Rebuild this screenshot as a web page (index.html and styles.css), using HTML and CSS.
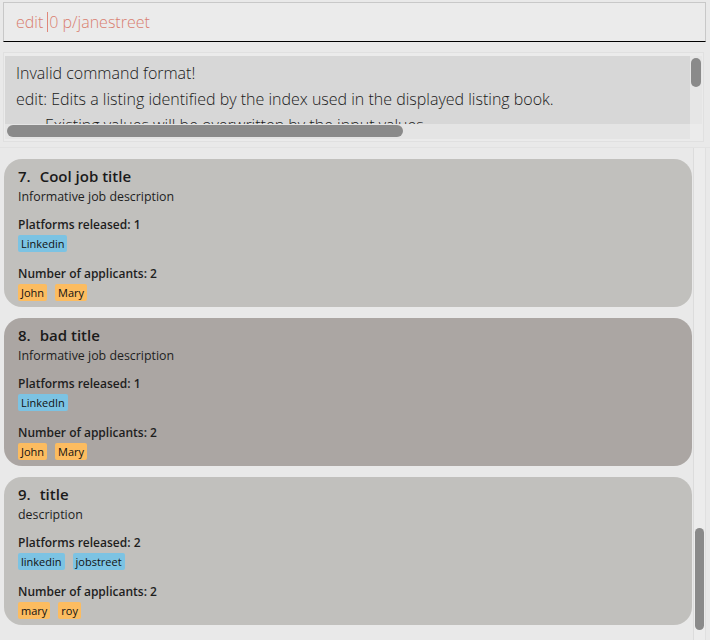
FILE: index.html
```html
<!DOCTYPE html>
<html>
<head>
<meta charset="utf-8">
<link rel="stylesheet" href="styles.css">
</head>
<body>
<div class="app">
  <div class="cmd">
    <span class="cmd-text">edit</span><span class="caret"></span><span class="cmd-text">0 p/janestreet</span>
  </div>

  <div class="result">
    <div class="result-top">
      <div class="result-view">
        <div class="rline">Invalid command format!</div>
        <div class="rline">edit: Edits a listing identified by the index used in the displayed listing book.</div>
        <div class="rline indent">Existing values will be overwritten by the input values.</div>
      </div>
      <div class="vbar"><div class="vthumb"></div></div>
    </div>
    <div class="hbar"><div class="hthumb"></div></div>
  </div>

  <div class="list-wrap">
    <div class="list">
      <div class="card">
        <div class="title"><span class="idx">7.</span>Cool job title</div>
        <div class="desc">Informative job description</div>
        <div class="label">Platforms released: 1</div>
        <div class="tags"><span class="tag blue">Linkedin</span></div>
        <div class="label second">Number of applicants: 2</div>
        <div class="tags"><span class="tag orange">John</span><span class="tag orange">Mary</span></div>
      </div>
      <div class="card selected">
        <div class="title"><span class="idx">8.</span>bad title</div>
        <div class="desc">Informative job description</div>
        <div class="label">Platforms released: 1</div>
        <div class="tags"><span class="tag blue">LinkedIn</span></div>
        <div class="label second">Number of applicants: 2</div>
        <div class="tags"><span class="tag orange">John</span><span class="tag orange">Mary</span></div>
      </div>
      <div class="card">
        <div class="title"><span class="idx">9.</span>title</div>
        <div class="desc">description</div>
        <div class="label">Platforms released: 2</div>
        <div class="tags"><span class="tag blue">linkedin</span><span class="tag blue">jobstreet</span></div>
        <div class="label second">Number of applicants: 2</div>
        <div class="tags"><span class="tag orange">mary</span><span class="tag orange">roy</span></div>
      </div>
    </div>
    <div class="lbar"><div class="lthumb"></div></div>
  </div>
</div>
</body>
</html>
```

FILE: styles.css
```css
* { box-sizing: border-box; }
html, body {
  margin: 0;
  padding: 0;
  background: #e9e9e9;
  width: 710px;
  height: 640px;
  overflow: hidden;
  font-family: "Open Sans", "Noto Sans", sans-serif;
  color: #1e1e1e;
}
.app {
  display: flex;
  flex-direction: column;
  height: 640px;
}
.cmd {
  margin: 2px 4px 0 3px;
  height: 40px;
  border: 1px solid #c8c8c8;
  border-bottom: 1px solid #000;
  background: #ebebeb;
  display: flex;
  align-items: center;
  padding-left: 12px;
  font-size: 16px;
  font-weight: 300;
}
.cmd-text {
  color: #d97e70;
  white-space: pre;
}
.caret {
  display: inline-block;
  width: 1px;
  height: 20px;
  background: #e0877a;
  margin: 0 1px 0 4px;
}
.result {
  margin: 10px 6px 0 3px;
  height: 90px;
  border: 1px solid #e0e0e0;
  background: #ebebeb;
  padding: 3px 1px 0 1px;
  display: flex;
  flex-direction: column;
}
.result-top {
  display: flex;
  height: 68px;
}
.result-view {
  flex: 1;
  background: #d7d7d7;
  overflow: hidden;
  padding: 4px 0 0 11px;
  font-size: 16px;
  font-weight: 300;
  color: #1a1a1a;
}
.rline {
  height: 26px;
  line-height: 26px;
  white-space: nowrap;
}
.rline.indent { padding-left: 29px; }
.vbar {
  width: 12px;
  background: #e6e6e6;
  padding: 2px 1px;
}
.vthumb {
  width: 10px;
  height: 29px;
  border-radius: 5px;
  background: #8a8a8a;
}
.hbar {
  height: 15px;
  display: flex;
  padding: 1px 0 0 2px;
  background: #e4e4e4;
  margin-right: 12px;
}
.hthumb {
  width: 396px;
  height: 12px;
  border-radius: 6px;
  background: #8a8a8a;
}
.list-wrap {
  margin-top: 5px;
  border-top: 1px solid #e2e2e2;
  flex: 1;
  display: flex;
  padding: 11px 4px 0 4px;
  min-height: 0;
}
.list {
  flex: 1;
  display: flex;
  flex-direction: column;
  gap: 11px;
}
.card {
  height: 148px;
  border-radius: 18px;
  background: #c1c0bd;
  padding: 7px 0 0 14px;
}
.card.selected { background: #aba6a3; }
.title {
  font-size: 15px;
  font-weight: 600;
  line-height: 21px;
  color: #1a1a1a;
}
.idx { margin-right: 9px; }
.desc {
  font-size: 12.4px;
  line-height: 20px;
  color: #1e1e1e;
}
.label {
  margin-top: 10px;
  font-size: 12px;
  font-weight: 600;
  line-height: 16px;
  color: #1e1e1e;
}
.label.second { margin-top: 14px; }
.tags {
  margin-top: 2px;
  display: flex;
  gap: 8px;
}
.tag {
  height: 17px;
  line-height: 17px;
  font-size: 11px;
  padding: 0 3px;
  border-radius: 2px;
  color: #111;
}
.tag.blue { background: #7cc3e3; }
.tag.orange { background: #fcbc60; }
.lbar {
  width: 13px;
  margin-left: 1px;
  margin-top: -11px;
  background: #ececec;
  border-left: 1px solid #dcdcdc;
  border-right: 1px solid #e0e0e0;
  display: flex;
  flex-direction: column;
  justify-content: flex-end;
  padding: 0 1px 10px 1px;
}
.lthumb {
  width: 9px;
  height: 102px;
  border-radius: 5px;
  background: #8a8a8a;
}
```
